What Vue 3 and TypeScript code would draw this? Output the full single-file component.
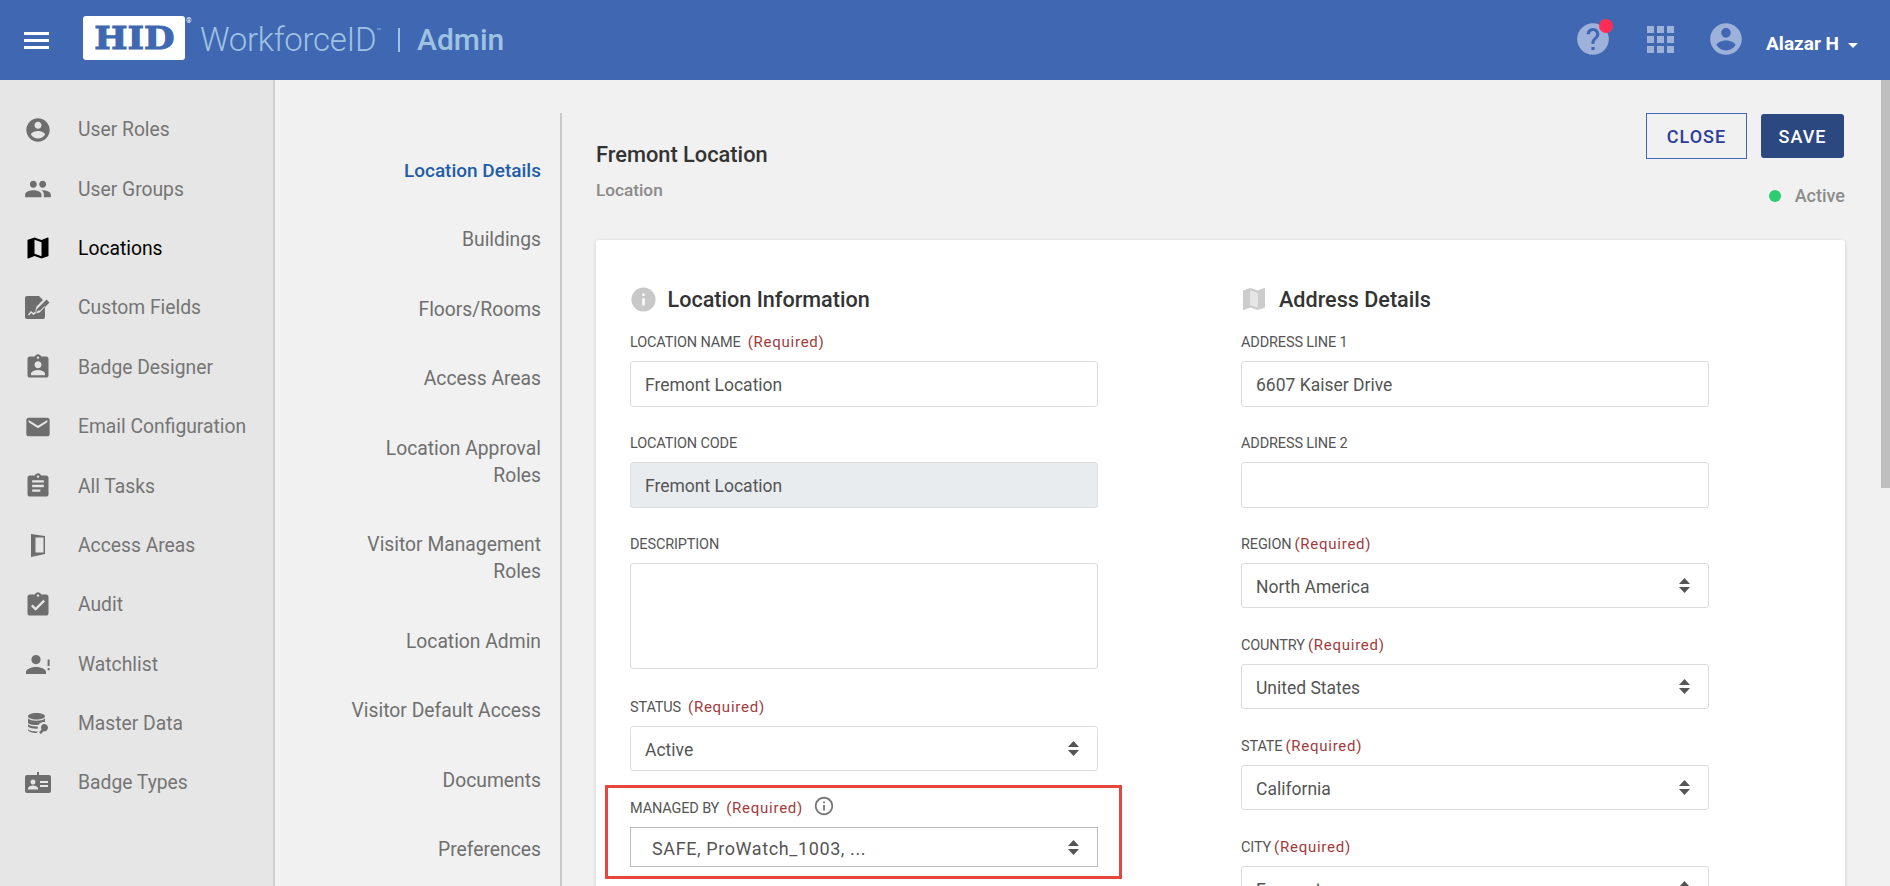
<script setup lang="ts">
interface NavItem {
  label: string
  view: string
  width: number
  height: number
  d: string
  active?: boolean
}

interface Field {
  label: string
  value?: string
  required?: boolean
  kind?: 'input' | 'select' | 'disabled' | 'area'
}

const accountPath =
  'M12 2C6.48 2 2 6.48 2 12s4.48 10 10 10 10-4.48 10-10S17.52 2 12 2zm0 3c1.66 0 3 1.34 3 3s-1.34 3-3 3-3-1.34-3-3 1.34-3 3-3zm0 14.2c-2.5 0-4.71-1.28-6-3.22.03-1.99 4-3.08 6-3.08 1.99 0 5.97 1.09 6 3.08-1.29 1.94-3.5 3.22-6 3.22z'
const mapPath =
  'M20.5 3l-.16.03L15 5.1 9 3 3.36 4.9c-.21.07-.36.25-.36.48V20.5c0 .28.22.5.5.5l.16-.03L9 18.9l6 2.1 5.64-1.9c.21-.07.36-.25.36-.48V3.5c0-.28-.22-.5-.5-.5zM15 19l-6-2.11V5l6 2.11V19z'

const sideItems: NavItem[] = [
  { label: 'User Roles', view: '0 0 24 24', width: 28, height: 28, d: accountPath },
  {
    label: 'User Groups',
    view: '0 0 24 24',
    width: 28,
    height: 28,
    d: 'M16 11c1.66 0 2.99-1.34 2.99-3S17.66 5 16 5c-1.66 0-3 1.34-3 3s1.34 3 3 3zm-8 0c1.66 0 2.99-1.34 2.99-3S9.66 5 8 5C6.34 5 5 6.34 5 8s1.34 3 3 3zm0 2c-2.33 0-7 1.17-7 3.5V19h14v-2.5c0-2.33-4.67-3.5-7-3.5zm8 0c-.29 0-.62.02-.97.05 1.16.84 1.97 1.97 1.97 3.45V19h6v-2.5c0-2.33-4.67-3.5-7-3.5z',
  },
  { label: 'Locations', view: '0 0 24 24', width: 28, height: 28, d: mapPath, active: true },
  {
    label: 'Custom Fields',
    view: '0 0 26 23',
    width: 26,
    height: 23,
    d: 'M2 0h12l4 4-6.5 6.5-1.2 5 5-1.2L20 10v11a2 2 0 0 1-2 2H2a2 2 0 0 1-2-2V2a2 2 0 0 1 2-2zM3 18.5l3-3.5 2.5 2 3-2.5 1 1.2-4 3.3-2.3-1.9-2 2.3zM21.5 3.5l3 3-10 10-4 1 1-4z',
  },
  {
    label: 'Badge Designer',
    view: '0 0 24 24',
    width: 28,
    height: 28,
    d: 'M19 3h-4.18C14.4 1.84 13.3 1 12 1c-1.3 0-2.4.84-2.82 2H5c-1.1 0-2 .9-2 2v14c0 1.1.9 2 2 2h14c1.1 0 2-.9 2-2V5c0-1.1-.9-2-2-2zm-7 0c.55 0 1 .45 1 1s-.45 1-1 1-1-.45-1-1 .45-1 1-1zm0 4c1.66 0 3 1.34 3 3s-1.34 3-3 3-3-1.34-3-3 1.34-3 3-3zm6 12H6v-1.4c0-2 4-3.1 6-3.1s6 1.1 6 3.1V19z',
  },
  {
    label: 'Email Configuration',
    view: '0 0 24 24',
    width: 28,
    height: 28,
    d: 'M20 4H4c-1.1 0-1.99.9-1.99 2L2 18c0 1.1.9 2 2 2h16c1.1 0 2-.9 2-2V6c0-1.1-.9-2-2-2zm0 4l-8 5-8-5V6l8 5 8-5v2z',
  },
  {
    label: 'All Tasks',
    view: '0 0 24 24',
    width: 28,
    height: 28,
    d: 'M19 3h-4.18C14.4 1.84 13.3 1 12 1c-1.3 0-2.4.84-2.82 2H5c-1.1 0-2 .9-2 2v14c0 1.1.9 2 2 2h14c1.1 0 2-.9 2-2V5c0-1.1-.9-2-2-2zm-7 0c.55 0 1 .45 1 1s-.45 1-1 1-1-.45-1-1 .45-1 1-1zm2 14H7v-2h7v2zm3-4H7v-2h10v2zm0-4H7V7h10v2z',
  },
  {
    label: 'Access Areas',
    view: '0 0 14 23',
    width: 14,
    height: 23,
    d: 'M0 0l14 2v18L0 23zM4.5 3.5h8v15h-8z',
  },
  {
    label: 'Audit',
    view: '0 0 24 24',
    width: 28,
    height: 28,
    d: 'M19 3h-4.18C14.4 1.84 13.3 1 12 1c-1.3 0-2.4.84-2.82 2H5c-1.1 0-2 .9-2 2v14c0 1.1.9 2 2 2h14c1.1 0 2-.9 2-2V5c0-1.1-.9-2-2-2zm-7 0c.55 0 1 .45 1 1s-.45 1-1 1-1-.45-1-1 .45-1 1-1zm-2 14l-4-4 1.41-1.41L10 14.17l6.59-6.59L18 9l-8 8z',
  },
  {
    label: 'Watchlist',
    view: '0 0 24 20',
    width: 24,
    height: 20,
    d: 'M10 1a4.6 4.6 0 1 0 .01 0zM0 20v-2c0-3.4 6.4-5 10-5s10 1.6 10 5v2zM21.6 5.5h2v6.5h-2zM21.6 14h2v2.2h-2z',
  },
  {
    label: 'Master Data',
    view: '0 0 20 21',
    width: 20,
    height: 21,
    d: 'M8.5 0C13 0 17 1.3 17 3.2s-4 3.3-8.500 3.300S0 5.100 0 3.200 4 0 8.500 0zM0 5.600c1.600 1.500 5 2.200 8.500 2.200s6.900-.7 8.500-2.200v3.400c-.6-.1-1.300-.1-2 0-2.100.3-3.700 1.500-4.500 3-.6.100-1.400.1-2 .1-3.500 0-6.900-.7-8.500-2.200zM0 11.200c1.600 1.500 5 2.200 8.500 2.200h1.300c-.1.800 0 1.500.2 2.200l-1.500.1c-3.500 0-6.900-.7-8.500-2.200zM0 16.300c1.600 1.500 5 2.200 8.500 2.200l1.500-.1-1.500 1.600C4 20 0 18.700 0 16.800zM15.500 11a3.800 3.800 0 0 1 4.500 3.500 3.800 3.800 0 0 1-4.500 3.800L13 21l-2-1.500 2.500-3a3.800 3.800 0 0 1 2-5.500z',
  },
  {
    label: 'Badge Types',
    view: '0 0 26 21',
    width: 26,
    height: 21,
    d: 'M2 3h22a2 2 0 0 1 2 2v14a2 2 0 0 1-2 2H2a2 2 0 0 1-2-2V5a2 2 0 0 1 2-2zM8 7.500a2.500 2.500 0 1 0 .01 0zM3 17.500v-1c0-2 3-3 5-3s5 1 5 3v1zM15 9h8v2h-8zM15 13h8v2h-8zM12 0h2v3h-2z',
  },
]

const subItems = [
  'Location Details',
  'Buildings',
  'Floors/Rooms',
  'Access Areas',
  'Location Approval Roles',
  'Visitor Management Roles',
  'Location Admin',
  'Visitor Default Access',
  'Documents',
  'Preferences',
]

const leftFields: Field[] = [
  { label: 'LOCATION NAME', value: 'Fremont Location', required: true },
  { label: 'LOCATION CODE', value: 'Fremont Location', kind: 'disabled' },
  { label: 'DESCRIPTION', kind: 'area' },
  { label: 'STATUS', value: 'Active', required: true, kind: 'select' },
]

const rightFields: Field[] = [
  { label: 'ADDRESS LINE 1', value: '6607 Kaiser Drive' },
  { label: 'ADDRESS LINE 2' },
  { label: 'REGION', value: 'North America', required: true, kind: 'select' },
  { label: 'COUNTRY', value: 'United States', required: true, kind: 'select' },
  { label: 'STATE', value: 'California', required: true, kind: 'select' },
  { label: 'CITY', value: 'Fremont', required: true, kind: 'select' },
]
</script>

<template>
  <div class="app">
    <header class="topbar">
      <button class="burger" aria-label="Menu"><i /><i /><i /></button>
      <div class="logo">
        <span class="logo__hid">HID</span>
        <span class="logo__reg">®</span>
      </div>
      <span class="brand">WorkforceID<sup>™</sup></span>
      <span class="brand-sep" />
      <span class="brand-admin">Admin</span>

      <div class="topbar__right">
        <span class="help">
          <svg viewBox="0 0 24 24" width="38" height="38">
            <path d="M12 2C6.48 2 2 6.48 2 12s4.48 10 10 10 10-4.48 10-10S17.52 2 12 2zm1 17h-2v-2h2v2zm2.07-7.75l-.9.92C13.45 12.9 13 13.500 13 15h-2v-.5c0-1.100.45-2.100 1.170-2.830l1.240-1.260c.37-.36.59-.86.59-1.410 0-1.100-.9-2-2-2s-2 .9-2 2H8c0-2.210 1.790-4 4-4s4 1.790 4 4c0 .88-.36 1.680-.93 2.250z" />
          </svg>
          <span class="help__dot" />
        </span>
        <span class="apps"><i v-for="n in 9" :key="n" /></span>
        <svg class="avatar" viewBox="0 0 24 24" width="38" height="38">
          <path :d="accountPath" />
        </svg>
        <span class="user">Alazar H</span>
        <span class="user-caret" />
      </div>
    </header>

    <div class="body">
      <nav class="side">
        <a v-for="item in sideItems" :key="item.label" class="side__item" :class="{ 'side__item--active': item.active }">
          <span class="side__icon">
            <svg :viewBox="item.view" :width="item.width" :height="item.height">
              <path fill-rule="evenodd" :d="item.d" />
            </svg>
          </span>
          {{ item.label }}
        </a>
      </nav>

      <div class="content">
        <nav class="subnav">
          <a v-for="(item, i) in subItems" :key="item" class="subnav__item" :class="{ 'subnav__item--active': i === 0 }">{{ item }}</a>
        </nav>

        <main class="page">
          <div class="page__head">
            <div>
              <h1 class="page__title">Fremont Location</h1>
              <div class="page__sub">Location</div>
            </div>
            <div class="page__actions">
              <div class="page__buttons">
                <button class="btn btn--ghost">CLOSE</button>
                <button class="btn btn--solid">SAVE</button>
              </div>
              <div class="status"><i class="status__dot" />Active</div>
            </div>
          </div>

          <section class="card">
            <div class="col">
              <h2 class="heading">
                <svg class="heading__info" viewBox="0 0 24 24" width="29" height="29">
                  <path d="M12 2C6.48 2 2 6.48 2 12s4.48 10 10 10 10-4.48 10-10S17.52 2 12 2zm1 15h-2v-6h2v6zm0-8h-2V7h2v2z" />
                </svg>
                Location Information
              </h2>
              <div v-for="f in leftFields" :key="f.label" class="field" :class="{ 'field--area': f.kind === 'area' }">
                <label class="label">{{ f.label }}<em v-if="f.required" class="req req--wide">(Required)</em></label>
                <div class="control" :class="f.kind ? `control--${f.kind}` : ''">
                  <span class="control__text">{{ f.value }}</span>
                  <svg v-if="f.kind === 'select'" class="arrows" viewBox="0 0 11 15" width="11" height="15">
                    <path d="M5.500 0L11 6H0zM0 9h11l-5.500 6z" />
                  </svg>
                </div>
              </div>
              <div class="managed">
                <label class="label">
                  MANAGED BY<em class="req req--wide">(Required)</em>
                  <svg class="managed__info" viewBox="0 0 24 24" width="22" height="22">
                    <path d="M11 7h2v2h-2zm0 4h2v6h-2zm1-9C6.480 2 2 6.480 2 12s4.480 10 10 10 10-4.480 10-10S17.520 2 12 2zm0 18c-4.410 0-8-3.590-8-8s3.590-8 8-8 8 3.590 8 8-3.590 8-8 8z" />
                  </svg>
                </label>
                <div class="control control--select control--managed">
                  <span class="control__text">SAFE, ProWatch_1003, ...</span>
                  <svg class="arrows" viewBox="0 0 11 15" width="11" height="15">
                    <path d="M5.500 0L11 6H0zM0 9h11l-5.500 6z" />
                  </svg>
                </div>
              </div>
            </div>

            <div class="col">
              <h2 class="heading heading--address">
                <svg class="heading__map" viewBox="3 3 18 18" width="22" height="22">
                  <path d="M9 5l6 2.110V19l-6-2.110z" fill="#e6e6e6" />
                  <path :d="mapPath" fill-rule="evenodd" />
                </svg>
                Address Details
              </h2>
              <div v-for="f in rightFields" :key="f.label" class="field">
                <label class="label">{{ f.label }}<em v-if="f.required" class="req">(Required)</em></label>
                <div class="control" :class="f.kind ? `control--${f.kind}` : ''">
                  <span class="control__text">{{ f.value }}</span>
                  <svg v-if="f.kind === 'select'" class="arrows" viewBox="0 0 11 15" width="11" height="15">
                    <path d="M5.500 0L11 6H0zM0 9h11l-5.500 6z" />
                  </svg>
                </div>
              </div>
            </div>
          </section>
        </main>
      </div>

      <div class="scrollbar"><div class="scrollbar__thumb" /></div>
    </div>
  </div>
</template>

<style scoped>
.app {
  height: 886px;
  overflow: hidden;
  display: flex;
  flex-direction: column;
  font-family: Roboto, "Liberation Sans", sans-serif;
  background: #f1f1f1;
}

.topbar {
  flex: 0 0 80px;
  display: flex;
  align-items: center;
  padding-left: 24px;
  background: #3f67b2;
  color: #9fc2e2;
}

.burger {
  display: flex;
  flex-direction: column;
  gap: 4px;
  width: 25px;
  padding: 0;
  border: none;
  background: none;
  margin-right: 34px;
}

.burger i {
  display: block;
  height: 3px;
  background: #fff;
}

.logo {
  position: relative;
  width: 102px;
  height: 44px;
  margin: -4px 15px 0 0;
  display: flex;
  align-items: center;
  justify-content: center;
  background: #fff;
  border-radius: 3px;
}

.logo__hid {
  font-family: "DejaVu Serif", serif;
  font-weight: 700;
  font-size: 32px;
  line-height: 44px;
  color: #3f67b2;
  -webkit-text-stroke: 1px #3f67b2;
  transform: scaleX(1.1);
}

.logo__reg {
  position: absolute;
  top: 0;
  left: 103px;
  font-size: 7px;
  line-height: 10px;
  color: #fff;
}

.brand {
  font-size: 33px;
  font-weight: 300;
  letter-spacing: -0.3px;
  line-height: 40px;
}

.brand sup {
  font-size: 8px;
  line-height: 0;
  vertical-align: 17px;
}

.brand-sep {
  width: 2px;
  height: 24px;
  margin: 0 17px 0 17px;
  background: #9fc2e2;
}

.brand-admin {
  font-size: 30px;
  font-weight: 500;
  line-height: 40px;
}

.topbar__right {
  margin-left: auto;
  display: flex;
  align-items: center;
  padding: 0 32px 2px 0;
  fill: #9db1da;
}

.help {
  position: relative;
  display: flex;
  margin-right: 35px;
}

.help__dot {
  position: absolute;
  top: -1px;
  right: -1px;
  width: 14px;
  height: 14px;
  border-radius: 50%;
  background: #ff2d55;
}

.apps {
  display: grid;
  grid-template-columns: repeat(3, 7px);
  gap: 3px;
  margin-right: 33px;
}

.apps i {
  height: 7px;
  background: #9db1da;
}

.avatar {
  margin-right: 21px;
}

.user {
  font-size: 19px;
  font-weight: 700;
  color: #fff;
  margin-top: 8px;
}

.user-caret {
  width: 0;
  height: 0;
  margin: 13px 0 0 9px;
  border: 5px solid transparent;
  border-top-color: #fff;
  border-bottom: 0;
}

.body {
  flex: 1;
  min-height: 0;
  display: flex;
}

.side {
  flex: 0 0 275px;
  box-sizing: border-box;
  padding-top: 20px;
  background: #e6e6e6;
  border-right: 2px solid #cfcfcf;
}

.side__item {
  display: flex;
  align-items: center;
  height: 59.4px;
  padding-left: 22px;
  font-size: 19.3px;
  color: #757575;
  fill: #6e6e6e;
}

.side__item--active {
  color: #000;
  fill: #000;
}

.side__icon {
  flex: 0 0 31px;
  display: flex;
  justify-content: center;
  margin-right: 25px;
}

.content {
  flex: 1;
  min-width: 0;
  display: flex;
  padding-top: 33px;
}

.subnav {
  flex: 0 0 287px;
  box-sizing: border-box;
  display: flex;
  flex-direction: column;
  gap: 42.5px;
  padding: 43.5px 19px 0 71px;
  border-right: 2px solid #c9c9c9;
  text-align: right;
  font-size: 19.3px;
  line-height: 27px;
  color: #6f6f6f;
}

.subnav__item--active {
  font-weight: 500;
  font-size: 19px;
  color: #1f5da8;
}

.page {
  flex: 1;
  min-width: 0;
  padding: 0 36px 0 34px;
  display: flex;
  flex-direction: column;
}

.page__head {
  flex: 0 0 127px;
  display: flex;
  justify-content: space-between;
}

.page__title {
  margin: 28px 0 10px;
  font-size: 21.8px;
  font-weight: 500;
  line-height: 28px;
  color: #333;
}

.page__sub {
  font-size: 17.2px;
  font-weight: 500;
  line-height: 22px;
  color: #8a8a8a;
}

.page__actions {
  display: flex;
  flex-direction: column;
  align-items: flex-end;
}

.page__buttons {
  display: flex;
  gap: 14px;
  align-items: center;
  height: 46px;
  padding-right: 1px;
}

.btn {
  height: 46px;
  font-family: inherit;
  font-size: 18px;
  font-weight: 500;
  letter-spacing: 1px;
  padding: 0;
}

.btn--ghost {
  width: 101px;
  border: 1px solid #3f67b2;
  background: transparent;
  color: #2b3c9c;
}

.btn--solid {
  width: 83px;
  height: 44px;
  border: none;
  border-radius: 3px;
  background: #2c4880;
  color: #fff;
}

.status {
  display: flex;
  align-items: center;
  margin-top: 25px;
  font-size: 18px;
  font-weight: 500;
  line-height: 24px;
  color: #8c8c8c;
}

.status__dot {
  width: 12px;
  height: 12px;
  margin-right: 14px;
  border-radius: 50%;
  background: #2ecc71;
}

.card {
  flex: 1;
  display: grid;
  grid-template-columns: 468px 468px;
  column-gap: 143px;
  align-content: start;
  padding: 44px 0 0 34px;
  background: #fff;
  border-radius: 3px;
  box-shadow: 0 1px 4px rgba(0, 0, 0, 0.14);
}

.heading {
  display: flex;
  align-items: center;
  height: 30px;
  margin: 0 0 18px;
  font-size: 21.6px;
  font-weight: 500;
  color: #333;
}

.heading__info {
  margin: 0 10px 0 -1.5px;
  fill: #c8c8c8;
}

.heading__map {
  margin: 0 14px 0 2px;
  fill: #cccccc;
}

.field {
  height: 101px;
}

.field--area {
  height: 163px;
}

.label {
  display: flex;
  align-items: center;
  height: 20px;
  margin-bottom: 9px;
  font-size: 14.5px;
  letter-spacing: -0.15px;
  color: #555;
}

.req {
  margin-left: 3px;
  font-size: 15px;
  font-style: normal;
  letter-spacing: 0.75px;
  color: #a33a3a;
}

.req--wide {
  margin-left: 7px;
}

.control {
  box-sizing: border-box;
  display: flex;
  align-items: center;
  justify-content: space-between;
  height: 46px;
  padding: 0 14px;
  background: #fff;
  border: 1px solid #dcdcdc;
  border-radius: 3px;
  font-size: 17.5px;
  color: #555;
  fill: #555;
}

.control__text {
  margin-top: 2px;
}

.control--disabled {
  background: #e9ecef;
}

.control--area {
  height: 106px;
}

.control--select {
  height: 45px;
}

.arrows {
  flex: none;
  margin-right: 4px;
}

.managed {
  box-sizing: border-box;
  width: 517px;
  height: 94px;
  margin: -13px 0 0 -25px;
  padding: 10px 0 0 22px;
  border: 3px solid #e8453c;
}

.managed__info {
  margin: -4px 0 0 10px;
  fill: #777;
}

.control--managed {
  width: 468px;
  height: 40px;
  padding-left: 21px;
  border-color: #bdbdbd;
  border-radius: 0;
  font-size: 18px;
  letter-spacing: 0.6px;
}

.scrollbar {
  flex: 0 0 9px;
  background: #f1f1f1;
}

.scrollbar__thumb {
  height: 408px;
  background: #bfbfbf;
}
</style>

<style>
html,
body {
  margin: 0;
  overflow: hidden;
}
</style>
